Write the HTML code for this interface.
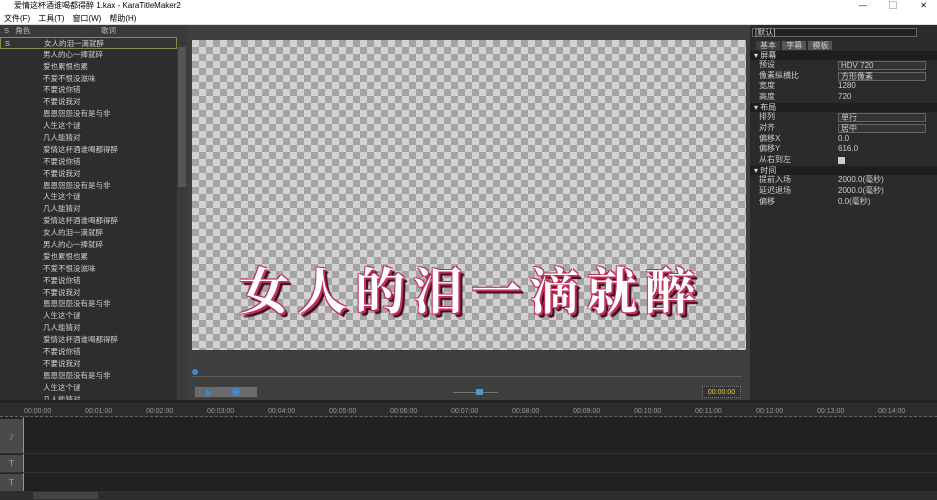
<!DOCTYPE html><html><head><meta charset="utf-8"><style>
*{margin:0;padding:0;box-sizing:border-box}
body{width:937px;height:500px;overflow:hidden;background:#2a2a2a;font-family:"Liberation Sans","Noto Sans CJK SC",sans-serif;font-size:8px;color:#ccc;position:relative}
.a{position:absolute}
#title{left:0;top:0;width:937px;height:12px;background:#fff;color:#000;font-size:8px;line-height:12px;padding-left:14px}
#menu{left:0;top:12px;width:937px;height:13px;background:#fff;color:#000;line-height:13px;padding-left:4px;border-bottom:1px solid #ddd}
#menu span{margin-right:8px}
#left{left:0;top:25px;width:187px;height:375px;background:#2d2d2d}
.row{height:11.9px;line-height:12px;white-space:nowrap;color:#d0d0d0;font-size:7.5px}
.row b{display:inline-block;width:43px;padding-left:4px;font-weight:normal}
#center{left:187px;top:25px;width:563px;height:375px;background:#3e3e3e}
#canvas{left:192px;top:40px;width:554px;height:310px;background-color:#c6c6c6;background-image:repeating-conic-gradient(#a4a4a4 0 25%,#d2d2d2 0 50%);background-size:14px 14px}
#lyric{left:235px;top:252px;width:480px;height:70px;font-family:"Noto Serif CJK SC",serif;font-size:50px;color:#fff;font-weight:bold;white-space:nowrap;text-shadow:-1px -1px 0 #c0305a,1px -1px 0 #c0305a,-1px 1px 0 #c0305a,2px 2px 0 #c0305a,3px 3px 0 #4a0a20,4px 4px 1px #300010}
#lyric span{display:inline-block;width:58px;text-align:center}
#right{left:750px;top:25px;width:187px;height:375px;background:#2b2b2b}
.sec{background:#1e1e1e;color:#ddd;height:9px;line-height:9px;padding-left:4px;margin-top:1px}
.p{height:10.6px;line-height:10.6px;padding-left:9px;position:relative;color:#ccc}
.p i{position:absolute;left:88px;font-style:normal;color:#ccc}
.p i.dd{border:1px solid #666;background:#333;width:88px;height:9px;line-height:8px;top:1px;padding-left:2px}
#tl{left:0;top:400px;width:937px;height:100px;background:#212121}
.tk{color:#999;font-size:7px;top:408px}
</style></head><body>
<div class="a" id="title">爱情这杯酒谁喝都得醉 1.kax - KaraTitleMaker2<span style="position:absolute;right:70px">—</span><span style="position:absolute;right:40px">▢</span><span style="position:absolute;right:10px">✕</span></div>
<div class="a" id="menu"><span>文件(F)</span><span>工具(T)</span><span>窗口(W)</span><span>帮助(H)</span></div>
<div class="a" id="left">
<div class="row" style="background:#3a3a3a;color:#bbb"><b>S &nbsp; 角色</b><span style="margin-left:58px">歌词</span></div>
<div class="row" style="border:1px solid #8a8a50;background:#333;width:177px"><b>S</b>女人的泪一滴就醉</div>
<div class="row"><b></b>男人的心一捧就碎</div><div class="row"><b></b>爱也累恨也累</div><div class="row"><b></b>不爱不恨没滋味</div><div class="row"><b></b>不要说你错</div><div class="row"><b></b>不要说我对</div><div class="row"><b></b>恩恩怨怨没有是与非</div><div class="row"><b></b>人生这个谜</div><div class="row"><b></b>几人能猜对</div><div class="row"><b></b>爱情这杯酒谁喝都得醉</div><div class="row"><b></b>不要说你错</div><div class="row"><b></b>不要说我对</div><div class="row"><b></b>恩恩怨怨没有是与非</div><div class="row"><b></b>人生这个谜</div><div class="row"><b></b>几人能猜对</div><div class="row"><b></b>爱情这杯酒谁喝都得醉</div><div class="row"><b></b>女人的泪一滴就醉</div><div class="row"><b></b>男人的心一捧就碎</div><div class="row"><b></b>爱也累恨也累</div><div class="row"><b></b>不爱不恨没滋味</div><div class="row"><b></b>不要说你错</div><div class="row"><b></b>不要说我对</div><div class="row"><b></b>恩恩怨怨没有是与非</div><div class="row"><b></b>人生这个谜</div><div class="row"><b></b>几人能猜对</div><div class="row"><b></b>爱情这杯酒谁喝都得醉</div><div class="row"><b></b>不要说你错</div><div class="row"><b></b>不要说我对</div><div class="row"><b></b>恩恩怨怨没有是与非</div><div class="row"><b></b>人生这个谜</div><div class="row"><b></b>几人能猜对</div>
<div class="a" style="left:177px;top:12px;width:10px;height:363px;background:#3a3a3a"><div class="a" style="left:1px;top:10px;width:8px;height:140px;background:#555"></div></div>
</div>
<div class="a" id="center"></div>
<div class="a" id="canvas"></div>
<div class="a" id="lyric"><span>女</span><span>人</span><span>的</span><span>泪</span><span>一</span><span>滴</span><span>就</span><span>醉</span></div>
<div class="a" style="left:192px;top:376px;width:550px;height:1px;background:#5a5a5a"></div>
<div class="a" style="left:192px;top:369px;width:6px;height:6px;border-radius:50%;background:#3a8ad0"></div>
<div class="a" style="left:194px;top:386px;width:64px;height:12px;background:#6a6a6a;border:1px solid #444"></div>
<div class="a" style="left:205px;top:388px;color:#3a8ad0;font-size:8px">▶</div>
<div class="a" style="left:232px;top:388px;width:8px;height:8px;border-radius:50%;background:#3a8ad0"></div>
<div class="a" style="left:453px;top:392px;width:45px;height:1px;background:#777"></div>
<div class="a" style="left:476px;top:389px;width:7px;height:6px;background:#4a9ad0"></div>
<div class="a" style="left:702px;top:386px;width:39px;height:12px;background:#333;border:1px dotted #777;color:#d8d040;line-height:11px;text-align:center;font-size:7px">00:00:00</div>
<div class="a" id="right">
<div style="margin:3px 2px;height:9px;border:1px solid #666;background:#222;line-height:8px;padding-left:2px;width:165px">[默认]</div>
<div style="height:10px;padding-left:6px"><span style="background:#3e3e3e;padding:0 4px">基本</span> <span style="background:#555;padding:0 4px">字幕</span> <span style="background:#555;padding:0 4px">模板</span></div>
<div class="sec">▾ 屏幕</div>
<div class="p">预设<i class="dd">HDV 720</i></div><div class="p">像素纵横比<i class="dd">方形像素</i></div><div class="p">宽度<i>1280</i></div><div class="p">高度<i>720</i></div>
<div class="sec">▾ 布局</div>
<div class="p">排列<i class="dd">单行</i></div><div class="p">对齐<i class="dd">居中</i></div><div class="p">偏移X<i>0.0</i></div><div class="p">偏移Y<i>616.0</i></div><div class="p">从右到左<i style="width:7px;height:7px;background:#ccc;top:2px"></i></div>
<div class="sec">▾ 时间</div>
<div class="p">提前入场<i>2000.0(毫秒)</i></div><div class="p">延迟退场<i>2000.0(毫秒)</i></div><div class="p">偏移<i>0.0(毫秒)</i></div>
</div>
<div class="a" id="tl"></div>
<div class="a" style="left:0;top:403px;width:937px;height:14px;background:#2c2c2c;border-bottom:1px dashed #666"></div>
<div class="a tk" style="left:24px">00:00:00</div><div class="a tk" style="left:85px">00:01:00</div><div class="a tk" style="left:146px">00:02:00</div><div class="a tk" style="left:207px">00:03:00</div><div class="a tk" style="left:268px">00:04:00</div><div class="a tk" style="left:329px">00:05:00</div><div class="a tk" style="left:390px">00:06:00</div><div class="a tk" style="left:451px">00:07:00</div><div class="a tk" style="left:512px">00:08:00</div><div class="a tk" style="left:573px">00:09:00</div><div class="a tk" style="left:634px">00:10:00</div><div class="a tk" style="left:695px">00:11:00</div><div class="a tk" style="left:756px">00:12:00</div><div class="a tk" style="left:817px">00:13:00</div><div class="a tk" style="left:878px">00:14:00</div>
<div class="a" style="left:0;top:419px;width:23px;height:34px;background:#4a4a4a;color:#4a90d0;font-size:12px;text-align:center;line-height:34px">♪</div>
<div class="a" style="left:0;top:455px;width:23px;height:17px;background:#4a4a4a;color:#9ab;text-align:center;line-height:17px">T</div>
<div class="a" style="left:0;top:474px;width:23px;height:17px;background:#4a4a4a;color:#9ab;text-align:center;line-height:17px">T</div>
<div class="a" style="left:23px;top:417px;width:1px;height:75px;background:#b0a020"></div>
<div class="a" style="left:0;top:453px;width:937px;height:1px;background:#333"></div>
<div class="a" style="left:0;top:472px;width:937px;height:1px;background:#333"></div>
<div class="a" style="left:0;top:491px;width:937px;height:9px;background:#2e2e2e"></div>
<div class="a" style="left:33px;top:492px;width:65px;height:7px;background:#444"></div>
</body></html>
